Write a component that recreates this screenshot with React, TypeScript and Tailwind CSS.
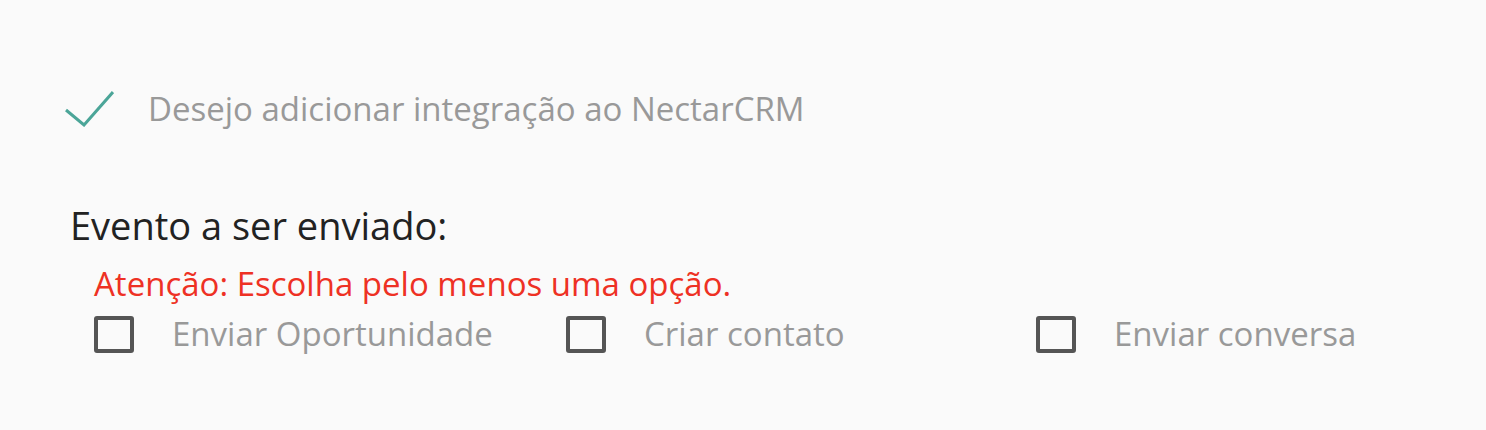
export default function App() {
  return (
    <div className="min-h-[430px] w-full bg-[#fafafa] font-['Open_Sans',sans-serif]">
      <div className="pt-[89px]">
        <div className="flex items-center pl-[64px]">
          <svg width="50" height="36" viewBox="0 0 50 36" className="shrink-0">
            <path d="M2 19 L20 34 L49 1" fill="none" stroke="#4ba598" strokeWidth="3" />
          </svg>
          <span className="ml-[34px] text-[33px] leading-[40px] text-[#999999]">
            Desejo adicionar integração ao NectarCRM
          </span>
        </div>
        <div className="mt-[73px] pl-[70px] text-[38px] leading-[46px] text-[#222222]">
          Evento a ser enviado:
        </div>
        <div className="mt-[16px] pl-[94px] text-[33px] leading-[40px] text-[#ee3124]">
          Atenção: Escolha pelo menos uma opção.
        </div>
        <div className="mt-[10px] flex pl-[94px]">
          <label className="flex w-[472px] items-center">
            <span className="h-[37px] w-[40px] shrink-0 rounded-[3px] border-4 border-[#555555]" />
            <span className="ml-[38px] text-[33px] leading-[40px] text-[#999999]">Enviar Oportunidade</span>
          </label>
          <label className="flex w-[470px] items-center">
            <span className="h-[37px] w-[40px] shrink-0 rounded-[3px] border-4 border-[#555555]" />
            <span className="ml-[38px] text-[33px] leading-[40px] text-[#999999]">Criar contato</span>
          </label>
          <label className="flex items-center">
            <span className="h-[37px] w-[40px] shrink-0 rounded-[3px] border-4 border-[#555555]" />
            <span className="ml-[38px] text-[33px] leading-[40px] text-[#999999]">Enviar conversa</span>
          </label>
        </div>
      </div>
    </div>
  );
}
